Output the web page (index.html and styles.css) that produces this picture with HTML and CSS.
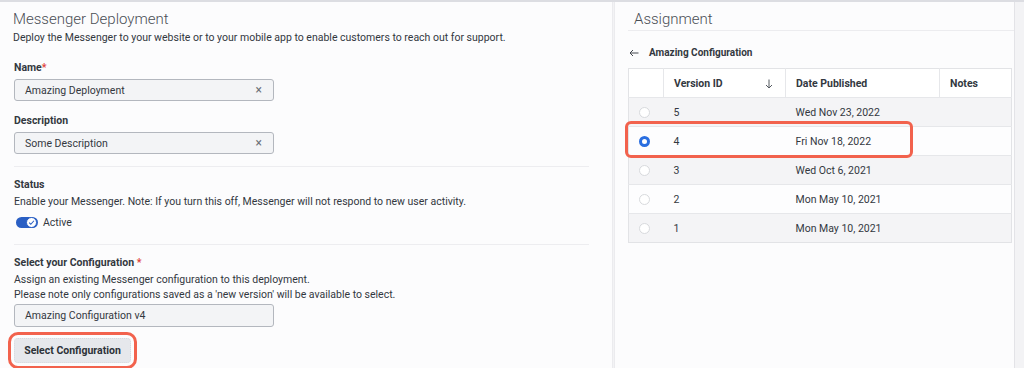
FILE: index.html
```html
<!DOCTYPE html>
<html lang="en">
<head>
    <meta charset="UTF-8">
    <title>Messenger Deployment</title>
    <link rel="stylesheet" href="styles.css">
</head>
<body>
    <div class="page">
        <!-- Deployment form -->
        <div class="deployment">
            <h2>Messenger Deployment</h2>
            <p class="intro">Deploy the Messenger to your website or to your mobile app to enable customers to reach out for support.</p>

            <label class="field-label name-label">Name<span class="req">*</span></label>
            <div class="text-input">
                <span>Amazing Deployment</span>
                <span class="clear">&times;</span>
            </div>

            <label class="field-label">Description</label>
            <div class="text-input">
                <span>Some Description</span>
                <span class="clear">&times;</span>
            </div>

            <hr class="divider">

            <label class="field-label section-label">Status</label>
            <p class="help">Enable your Messenger. Note: If you turn this off, Messenger will not respond to new user activity.</p>
            <div class="toggle-row">
                <span class="toggle">
                    <span class="knob">
                        <svg width="7" height="7" viewBox="0 0 8 8"><path d="M1.3 4.2 L3.2 6 L6.8 2" fill="none" stroke="#2a5fc4" stroke-width="1.2"/></svg>
                    </span>
                </span>
                <span>Active</span>
            </div>

            <hr class="divider second">

            <label class="field-label section-label">Select your Configuration <span class="req">*</span></label>
            <p class="help">Assign an existing Messenger configuration to this deployment.<br>Please note only configurations saved as a 'new version' will be available to select.</p>
            <div class="text-input config-input">
                <span>Amazing Configuration v4</span>
            </div>
            <button class="select-btn">Select Configuration</button>
        </div>

        <!-- Assignment panel -->
        <div class="assignment">
            <h2>Assignment</h2>
            <div class="back-row">
                <svg width="10" height="8" viewBox="0 0 10 8"><path d="M9.5 4 H1 M4 1 L1 4 L4 7" fill="none" stroke="#44484f" stroke-width="1"/></svg>
                <span>Amazing Configuration</span>
            </div>

            <div class="version-table">
                <table>
                    <thead>
                        <tr>
                            <th class="col-radio"></th>
                            <th class="col-id">Version ID <span class="sort">
                                <svg width="8" height="10" viewBox="0 0 8 10"><path d="M4 0.5 V9 M1 6 L4 9 L7 6" fill="none" stroke="#555a61" stroke-width="1"/></svg>
                            </span></th>
                            <th class="col-date">Date Published</th>
                            <th class="col-notes">Notes</th>
                        </tr>
                    </thead>
                    <tbody>
                        <tr>
                            <td><span class="radio"></span></td>
                            <td>5</td>
                            <td>Wed Nov 23, 2022</td>
                            <td></td>
                        </tr>
                        <tr>
                            <td><span class="radio checked"></span></td>
                            <td>4</td>
                            <td>Fri Nov 18, 2022</td>
                            <td></td>
                        </tr>
                        <tr>
                            <td><span class="radio"></span></td>
                            <td>3</td>
                            <td>Wed Oct 6, 2021</td>
                            <td></td>
                        </tr>
                        <tr>
                            <td><span class="radio"></span></td>
                            <td>2</td>
                            <td>Mon May 10, 2021</td>
                            <td></td>
                        </tr>
                        <tr>
                            <td><span class="radio"></span></td>
                            <td>1</td>
                            <td>Mon May 10, 2021</td>
                            <td></td>
                        </tr>
                    </tbody>
                </table>
                <div class="highlight"></div>
            </div>
        </div>
    </div>
</body>
</html>
```

FILE: styles.css
```css
body {
    font-family: Roboto, 'Liberation Sans', sans-serif;
    background-color: #f3f3f5;
    color: #33383f;
    margin: 0;
    padding: 0;
}

.page {
    display: flex;
    height: 366px;
    border-top: 2px solid #dcdde2;
    overflow: hidden;
}

.deployment {
    width: 598px;
    padding: 8px 0 0 14px;
    background: #fcfcfd;
    border-right: 1px solid #ebebee;
}

.deployment h2, .assignment h2 {
    margin: 0;
    font-size: 15px;
    font-weight: 300;
    line-height: 18px;
    color: #4a4e55;
}

.deployment h2 {
    margin-left: -1px;
}

.intro {
    margin: 3px 0 0 -1px;
    font-size: 10.5px;
    line-height: 14px;
}

.field-label {
    display: block;
    font-size: 10.5px;
    font-weight: 700;
    line-height: 14px;
    margin-top: 13px;
    margin-bottom: 4px;
}

.name-label {
    margin-top: 16px;
}

.section-label {
    margin-top: 11px;
    margin-bottom: 2px;
}

.req {
    color: #e0433a;
}

.text-input {
    width: 238px;
    height: 20px;
    display: flex;
    align-items: center;
    justify-content: space-between;
    padding: 0 10px;
    box-sizing: content-box;
    background: #f3f4f6;
    border: 1px solid #b3b7be;
    border-radius: 3px;
    font-size: 10.5px;
}

.clear {
    font-size: 12px;
    color: #6b7078;
    margin-right: 1px;
}

.divider {
    border: none;
    border-top: 1px solid #ededf0;
    margin: 12px 0 0 0;
    width: 575px;
}

.divider.second {
    margin-top: 15px;
}

.help {
    margin: 0;
    font-size: 10.5px;
    line-height: 15px;
}

.toggle-row {
    display: flex;
    align-items: center;
    gap: 5px;
    font-size: 10.5px;
    height: 14px;
    margin: 6px 0 0 2px;
}

.toggle {
    width: 21px;
    height: 11px;
    background: #2a5fc4;
    border-radius: 6px;
    display: flex;
    justify-content: flex-end;
    align-items: center;
    padding: 0 1px 0 0;
}

.toggle .knob {
    width: 11px;
    height: 11px;
    border-radius: 50%;
    background: #fff;
    border: 1px solid #2a5fc4;
    box-sizing: border-box;
    display: flex;
    align-items: center;
    justify-content: center;
}

.toggle .knob svg {
    display: block;
}

.config-input {
    margin-top: 2px;
    height: 21px;
}

.select-btn {
    display: block;
    margin-top: 11px;
    width: 117px;
    height: 25px;
    background: #e6e8ec;
    border: 1px dotted #d6d9de;
    border-radius: 4px;
    font-family: Roboto, 'Liberation Sans', sans-serif;
    font-size: 10.5px;
    font-weight: 700;
    color: #2d3238;
    outline: 3px solid #f2624d;
    outline-offset: 3px;
}

.assignment {
    width: 386px;
    margin-left: 1px;
    padding: 8px 0 0 13px;
    background: #fcfcfd;
    border-left: 1px solid #ebebee;
    border-right: 1px solid #e3e3e7;
}

.assignment h2 {
    padding: 0 0 1px 6px;
    height: 19px;
    border-bottom: 1px solid #ececef;
}

.back-row {
    display: flex;
    align-items: center;
    gap: 10px;
    font-size: 10px;
    font-weight: 700;
    margin: 15px 0 8px 1px;
    line-height: 14px;
}

.back-row svg {
    display: block;
}

.version-table {
    position: relative;
    width: 384px;
}

.version-table table {
    width: 100%;
    border-collapse: collapse;
    font-size: 10.5px;
    border: 1px solid #e2e3e6;
}

.version-table th {
    height: 28px;
    text-align: left;
    font-weight: 700;
    background: #fff;
    border-left: 1px solid #e6e7ea;
    padding: 0 0 0 10px;
}

.version-table th.col-radio {
    border-left: none;
    width: 24px;
}

.version-table th.col-id {
    width: 111px;
}

.version-table th.col-date {
    width: 143px;
}

.sort {
    float: right;
    margin-right: 12px;
    margin-top: 2px;
}

.sort svg {
    display: block;
}

.version-table td {
    height: 28px;
    padding: 0 0 0 10px;
    border-top: 1px solid #e6e7ea;
}

.version-table tbody tr:nth-child(odd) td {
    background: #f4f4f6;
}

.version-table tbody tr:nth-child(even) td {
    background: #fdfdfe;
}

.radio {
    display: block;
    width: 9px;
    height: 9px;
    border: 1px solid #d8dadd;
    border-radius: 50%;
    background: #fff;
}

.radio.checked {
    border: 3px solid #2a6ee0;
    width: 5px;
    height: 5px;
}

.highlight {
    position: absolute;
    left: -3px;
    top: 53px;
    width: 282px;
    height: 31px;
    border: 3px solid #f2624d;
    border-radius: 6px;
}
```
